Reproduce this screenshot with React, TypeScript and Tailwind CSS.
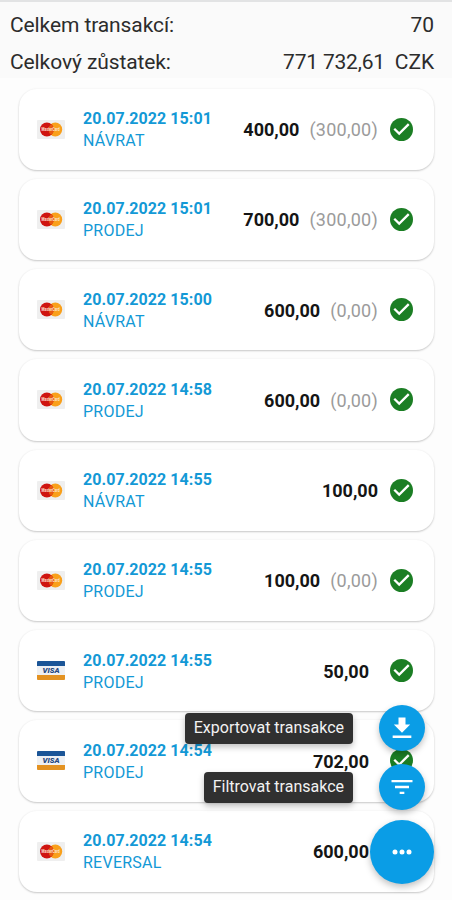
type Card = "mastercard" | "visa";

type Transaction = {
  card: Card;
  date: string;
  type: string;
  amount: string;
  tip?: string;
  flush?: boolean;
};

const transactions: Transaction[] = [
  { card: "mastercard", date: "20.07.2022 15:01", type: "NÁVRAT", amount: "400,00", tip: "(300,00)" },
  { card: "mastercard", date: "20.07.2022 15:01", type: "PRODEJ", amount: "700,00", tip: "(300,00)" },
  { card: "mastercard", date: "20.07.2022 15:00", type: "NÁVRAT", amount: "600,00", tip: "(0,00)" },
  { card: "mastercard", date: "20.07.2022 14:58", type: "PRODEJ", amount: "600,00", tip: "(0,00)" },
  { card: "mastercard", date: "20.07.2022 14:55", type: "NÁVRAT", amount: "100,00", flush: true },
  { card: "mastercard", date: "20.07.2022 14:55", type: "PRODEJ", amount: "100,00", tip: "(0,00)" },
  { card: "visa", date: "20.07.2022 14:55", type: "PRODEJ", amount: "50,00" },
  { card: "visa", date: "20.07.2022 14:54", type: "PRODEJ", amount: "702,00" },
  { card: "mastercard", date: "20.07.2022 14:54", type: "REVERSAL", amount: "600,00" },
];

function MastercardLogo() {
  return (
    <svg viewBox="0 0 28 19" className="h-[19px] w-7 shrink-0">
      <rect width="28" height="19" rx="1" fill="#efefef" />
      <circle cx="18.3" cy="9.5" r="6.9" fill="#f9a01b" />
      <circle cx="9.9" cy="9.5" r="6.9" fill="#cf1410" />
      <path d="M14.1 4.1a6.9 6.9 0 0 1 0 10.8a6.9 6.9 0 0 1 0-10.8z" fill="#e8590f" />
      <text
        x="13.6"
        y="11.2"
        textAnchor="middle"
        fontFamily="Roboto, sans-serif"
        fontSize="4.6"
        fontWeight="700"
        textLength="18"
        lengthAdjust="spacingAndGlyphs"
        fill="#ffe3d2"
      >
        MasterCard
      </text>
    </svg>
  );
}

function VisaLogo() {
  return (
    <svg viewBox="0 0 28 19" className="h-[19px] w-7 shrink-0">
      <rect width="28" height="19" rx="1" fill="#eef0f3" />
      <path d="M1 0h26a1 1 0 0 1 1 1v4H0V1a1 1 0 0 1 1-1z" fill="#1b5597" />
      <path d="M0 14h28v4a1 1 0 0 1-1 1H1a1 1 0 0 1-1-1z" fill="#e39222" />
      <text
        x="14"
        y="12.3"
        textAnchor="middle"
        fontFamily="Roboto, sans-serif"
        fontSize="7.8"
        fontWeight="900"
        fontStyle="italic"
        textLength="17"
        lengthAdjust="spacingAndGlyphs"
        fill="#27497f"
      >
        VISA
      </text>
    </svg>
  );
}

function CheckIcon() {
  return (
    <svg viewBox="2 2 20 20" className="size-[23px] shrink-0">
      <circle cx="12" cy="12" r="10" fill="#1b7e24" />
      <path d="M10 17l-5-5 1.41-1.41L10 14.17l7.59-7.59L19 8l-9 9z" fill="#fff" />
    </svg>
  );
}

function TransactionCard({ item }: { item: Transaction }) {
  return (
    <div className="flex h-[81.25px] items-center rounded-[18px] bg-white pr-[21px] pl-[18px] shadow-[0_1px_2px_rgba(0,0,0,0.2),0_0_3px_rgba(0,0,0,0.04)]">
      {item.card === "visa" ? <VisaLogo /> : <MastercardLogo />}
      <div className="ml-[18px] flex flex-col pt-[2px] text-[#1399d6]">
        <span className="text-[16px] leading-[22px] font-bold tracking-[0.06px]">{item.date}</span>
        <span className="text-[16px] leading-[22px] tracking-[0.25px]">{item.type}</span>
      </div>
      <div className="ml-auto flex items-center pt-[2px] text-[18px] leading-6">
        <span className="font-bold text-[#151515]">{item.amount}</span>
        {item.tip && <span className="ml-[10px] tracking-[0.25px] text-[#9b9b9b]">{item.tip}</span>}
        {!item.tip && !item.flush && <span className="w-[9px]" />}
      </div>
      <div className="ml-3">
        <CheckIcon />
      </div>
    </div>
  );
}

export default function App() {
  return (
    <div className="relative h-[900px] w-[452px] overflow-hidden bg-[#fdfdfd] font-['Roboto',sans-serif]">
      <header className="border-t-2 border-[#e2e3e4] bg-[#fafafa] pr-[18px] pl-[10px] text-[21px] tracking-[-0.1px] text-[#2c2c2c]">
        <div className="flex h-[39px] items-center justify-between pt-[6px] leading-8">
          <span>Celkem transakcí:</span>
          <span>70</span>
        </div>
        <div className="flex h-[37px] items-center justify-between pt-[4px] leading-8">
          <span>Celkový zůstatek:</span>
          <div className="flex gap-[10px]">
            <span className="tracking-[-0.2px]">771 732,61</span>
            <span>CZK</span>
          </div>
        </div>
      </header>

      <main className="flex flex-col gap-[9px] pt-[10.5px] pr-[18px] pl-[19px]">
        {transactions.map((item, i) => (
          <TransactionCard key={i} item={item} />
        ))}
      </main>

      {/* Floating actions */}
      <div className="absolute right-[18px] bottom-[16px] flex flex-col items-end">
        <div className="mr-[9px] flex items-center gap-[26px]">
          <span className="flex h-[31px] items-center rounded-[4px] bg-[#303030] px-[9px] text-[16px] text-[#f2f2f2] shadow-[0_3px_6px_rgba(0,0,0,0.25)]">
            Exportovat transakce
          </span>
          <button className="flex size-[46px] items-center justify-center rounded-full bg-[#0a9de6] shadow-[0_3px_6px_rgba(0,0,0,0.25)]">
            <svg viewBox="0 0 24 24" className="size-7" fill="#fff">
              <path d="M19 9h-4V3H9v6H5l7 7 7-7zM4 18.5v2h16v-2H4z" />
            </svg>
          </button>
        </div>
        <div className="mt-[13px] mr-[9px] flex items-center gap-[26px]">
          <span className="flex h-[31px] items-center rounded-[4px] bg-[#303030] px-[9px] text-[16px] text-[#f2f2f2] shadow-[0_3px_6px_rgba(0,0,0,0.25)]">
            Filtrovat transakce
          </span>
          <button className="flex size-[46px] items-center justify-center rounded-full bg-[#0a9de6] shadow-[0_3px_6px_rgba(0,0,0,0.25)]">
            <svg viewBox="0 0 24 24" className="size-7" fill="#fff">
              <path d="M10 18h4v-2h-4v2zM3 6v2h18V6H3zm3 7h12v-2H6v2z" />
            </svg>
          </button>
        </div>
        <button className="mt-[10px] flex size-16 items-center justify-center rounded-full bg-[#0a9de6] shadow-[0_3px_7px_rgba(0,0,0,0.25)]">
          <svg viewBox="0 0 20 6" className="h-[6px] w-5" fill="#fff">
            <circle cx="3" cy="3" r="2.5" />
            <circle cx="10" cy="3" r="2.5" />
            <circle cx="17" cy="3" r="2.5" />
          </svg>
        </button>
      </div>
    </div>
  );
}
